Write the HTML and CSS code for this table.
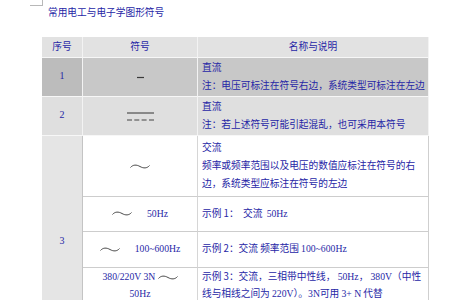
FILE: index.html
```html
<!DOCTYPE html>
<html>
<head>
<meta charset="utf-8">
<link rel="stylesheet" href="styles.css">
</head>
<body>
<div class="corner"></div>
<h1 class="title">常用电工与电子学图形符号</h1>
<table class="symtable">
  <colgroup><col class="col-no"><col class="col-sym"><col class="col-desc"></colgroup>
  <thead>
    <tr class="head">
      <th class="h-no">序号</th>
      <th class="h-sym">符号</th>
      <th class="h-desc">名称与说明</th>
    </tr>
  </thead>
  <tbody>
    <tr class="row1">
      <td class="no">1</td>
      <td class="sym"><svg class="dash" width="7" height="3" viewBox="0 0 7 3"><path d="M0 1.5H7" stroke="#3a3a3a" stroke-width="1.2"/></svg></td>
      <td class="desc">直流<br>注：电压可标注在符号右边，系统类型可标注在左边</td>
    </tr>
    <tr class="row2">
      <td class="no">2</td>
      <td class="sym"><svg class="dcdash" width="27" height="9" viewBox="0 0 27 9"><path d="M0 1H27" stroke="#333" stroke-width="1"/><path d="M0 8H5M7.3 8H12.3M14.6 8H19.6M22 8H27" stroke="#444" stroke-width="1"/></svg></td>
      <td class="desc">直流<br>注：若上述符号可能引起混乱，也可采用本符号</td>
    </tr>
    <tr class="row3a">
      <td class="no no3" rowspan="4">3</td>
      <td class="sym white"><svg class="tilde" width="20" height="7" viewBox="0 0 20 7"><path d="M0.5 4.5C3 1.5 6.5 1.5 10 3.5C13.5 5.5 17 5.5 19.5 2.5" fill="none" stroke="#333" stroke-width="0.9"/></svg></td>
      <td class="desc white">交流<br>频率或频率范围以及电压的数值应标注在符号的右<br>边，系统类型应标注在符号的左边</td>
    </tr>
    <tr class="row3b">
      <td class="sym white"><svg class="tilde" width="20" height="7" viewBox="0 0 20 7"><path d="M0.5 4.5C3 1.5 6.5 1.5 10 3.5C13.5 5.5 17 5.5 19.5 2.5" fill="none" stroke="#333" stroke-width="0.9"/></svg><span class="gap15"></span><span class="lat">50Hz</span></td>
      <td class="desc white">示例 1：&nbsp;&nbsp;交流&nbsp;&nbsp;<span class="lat">50Hz</span></td>
    </tr>
    <tr class="row3c">
      <td class="sym white"><svg class="tilde" width="20" height="7" viewBox="0 0 20 7"><path d="M0.5 4.5C3 1.5 6.5 1.5 10 3.5C13.5 5.5 17 5.5 19.5 2.5" fill="none" stroke="#333" stroke-width="0.9"/></svg><span class="gap15"></span><span class="lat">100~600Hz</span></td>
      <td class="desc white">示例 2：交流 频率范围 <span class="lat">100~600Hz</span></td>
    </tr>
    <tr class="row3d">
      <td class="sym white tight"><span class="lat">380/220V 3N</span> <svg class="tilde" width="20" height="7" viewBox="0 0 20 7"><path d="M0.5 4.5C3 1.5 6.5 1.5 10 3.5C13.5 5.5 17 5.5 19.5 2.5" fill="none" stroke="#333" stroke-width="0.9"/></svg><br><span class="lat">50Hz</span></td>
      <td class="desc white tight">示例 3：交流，三相带中性线，&nbsp;<span class="lat">50Hz</span>，&nbsp;<span class="lat">380V</span>（中性<br>线与相线之间为 <span class="lat">220V</span>）。<span class="lat">3N</span>可用 <span class="lat">3+ N</span> 代替</td>
    </tr>
  </tbody>
</table>
</body>
</html>
```
FILE: styles.css
```css
html, body {
  margin: 0;
  padding: 0;
  background: #ffffff;
}
body {
  font-family: "Noto Sans CJK SC", "Noto Sans CJK JP", sans-serif;
  color: #2626a6;
  overflow: hidden;
}
.corner {
  margin-left: 30px;
  width: 12px;
  height: 5px;
  border-right: 1px solid #b8b8b8;
  border-bottom: 1px solid #b8b8b8;
}
.title {
  margin: 0 0 0 48px;
  font-size: 9.7px;
  font-weight: normal;
  line-height: 12px;
  height: 12px;
  white-space: nowrap;
}
.symtable {
  margin: 19px 0 0 42px;
  border-collapse: separate;
  border-spacing: 0;
  table-layout: fixed;
  width: 387px;
  font-size: 9.7px;
  line-height: 18px;
}
.col-no { width: 41px; }
.col-sym { width: 115px; }
.col-desc { width: 231px; }

.symtable th,
.symtable td {
  box-sizing: border-box;
  padding: 0;
  border-right: 1px solid #f3f3f3;
  border-bottom: 1px solid #f7f7f7;
  white-space: nowrap;
  overflow: visible;
}
.symtable th {
  background: #e2e2e2;
  font-weight: normal;
  text-align: center;
  vertical-align: middle;
  padding-bottom: 2px;
}
.head { height: 21px; }
.row1 { height: 39px; }
.row2 { height: 39px; }
.row3a { height: 61px; }
.row3b { height: 35px; }
.row3c { height: 36px; }
.row3d { height: 40px; }

.symtable td.no {
  text-align: center;
  vertical-align: middle;
  font-family: "Liberation Serif", serif;
  font-size: 10px;
  padding-bottom: 2px;
}
.row1 td { background: #c8c8c8; }
.symtable .row1 td.no { background: #bcbcbc; }
.row2 td { background: #dfdfdf; }
.symtable td.no3 {
  background: #e5e5e5;
  vertical-align: top;
  padding: 96px 0 0 0;
  border-right: 1px solid #c4c4c4;
  border-bottom: none;
}
.symtable td.sym {
  text-align: center;
  vertical-align: middle;
  padding-bottom: 2px;
}
.symtable td.desc {
  text-align: left;
  vertical-align: middle;
  padding: 0 0 2px 4px;
}
.symtable td.white {
  background: #ffffff;
  border-bottom: 1px solid #cdcdcd;
}
.symtable td.sym.white { border-right: 1px solid #d6d6d6; }
.symtable td.desc.white { border-right: 1px solid #cfcfcf; }
.symtable td.tight {
  vertical-align: top;
  padding-top: 0;
  line-height: 17px;
}

.lat {
  font-family: "Liberation Serif", serif;
  font-size: 9.7px;
}
.gap15 {
  display: inline-block;
  width: 15px;
}
svg { vertical-align: middle; }
.dash { display: inline-block; }
.dcdash { display: inline-block; }
.tilde { display: inline-block; }
```
